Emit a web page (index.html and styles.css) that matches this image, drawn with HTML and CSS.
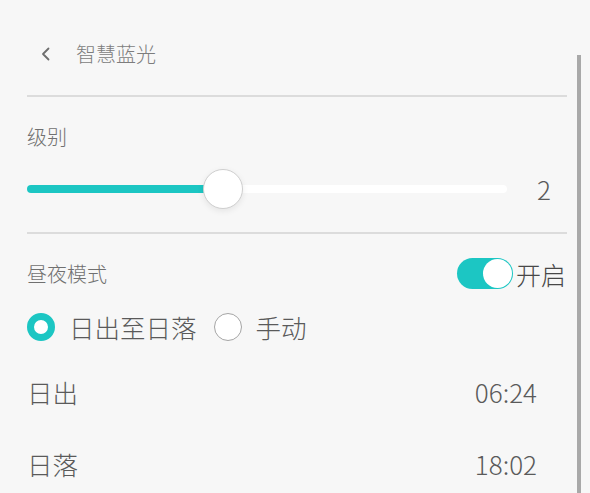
FILE: index.html
```html
<!DOCTYPE html>
<html lang="zh">
<head>
<meta charset="utf-8">
<link rel="stylesheet" href="styles.css">
</head>
<body>
<div class="window">
  <main class="panel">
    <header class="header">
      <svg class="back" width="12" height="16" viewBox="0 0 12 16"><path d="M8.5 2.5 L3 8 L8.5 13.5" fill="none" stroke="#6e6e6e" stroke-width="1.8" stroke-linecap="round" stroke-linejoin="round"/></svg>
      <span class="title">智慧蓝光</span>
    </header>
    <div class="divider"></div>

    <section class="level">
      <div class="label">级别</div>
      <div class="slider-row">
        <div class="slider">
          <div class="track"><div class="fill" style="width: 196px"></div></div>
          <div class="thumb" style="left: 196px"></div>
        </div>
        <span class="value">2</span>
      </div>
    </section>
    <div class="divider"></div>

    <section class="daynight">
      <div class="row-head">
        <span class="label">昼夜模式</span>
        <div class="switch-wrap">
          <span class="switch"><span class="knob"></span></span>
          <span class="switch-text">开启</span>
        </div>
      </div>
      <div class="radios">
        <label class="radio"><span class="dot on"></span><span class="rtext">日出至日落</span></label>
        <label class="radio"><span class="dot"></span><span class="rtext">手动</span></label>
      </div>
      <div class="times">
        <div class="time-row"><span class="tname">日出</span><span class="tval">06:24</span></div>
        <div class="time-row"><span class="tname">日落</span><span class="tval">18:02</span></div>
      </div>
    </section>
  </main>
  <div class="rail"><div class="thumbbar"></div></div>
</div>
</body>
</html>
```
FILE: styles.css
```css
html, body {
  margin: 0;
  padding: 0;
  height: 100%;
  overflow: hidden;
}
body {
  background: #f7f7f7;
  font-family: "Noto Sans CJK SC Light", "Noto Sans CJK SC DemiLight", "Noto Sans CJK SC", "Noto Sans", sans-serif;
  font-weight: 300;
  color: #666;
}
.window {
  display: flex;
  height: 493px;
}
.panel {
  width: 540px;
  padding-left: 27px;
  flex: none;
}
.header {
  height: 95px;
  display: flex;
  align-items: center;
  padding-top: 12px;
  box-sizing: border-box;
}
.back {
  margin-left: 13px;
  margin-right: 24px;
}
.title {
  font-size: 20px;
  color: #7d7d7d;
  line-height: 24px;
}
.divider {
  height: 2px;
  background: #dcdcdc;
}
.level {
  padding-top: 28px;
  height: 135px;
  box-sizing: border-box;
}
.label {
  font-size: 20px;
  line-height: 24px;
  color: #707070;
}
.slider-row {
  margin-top: 20px;
  height: 40px;
  display: flex;
  align-items: center;
}
.slider {
  position: relative;
  width: 480px;
  height: 40px;
  display: flex;
  align-items: center;
}
.track {
  width: 100%;
  height: 8px;
  border-radius: 4px;
  background: #fff;
  overflow: hidden;
}
.fill {
  height: 100%;
  background: #1cc6c3;
}
.thumb {
  position: absolute;
  top: 0;
  width: 40px;
  height: 40px;
  margin-left: -20px;
  box-sizing: border-box;
  border-radius: 50%;
  background: #fff;
  border: 1px solid #cfcfcf;
  box-shadow: 0 2px 6px rgba(0,0,0,0.08);
}
.value {
  margin-left: 30px;
  font-size: 26px;
  line-height: 30px;
  color: #5a5a5a;
}
.daynight {
  padding-top: 24px;
}
.row-head {
  height: 31px;
  display: flex;
  align-items: center;
  justify-content: space-between;
}
.switch-wrap {
  display: flex;
  align-items: center;
}
.switch {
  width: 56px;
  height: 31px;
  border-radius: 16px;
  background: #1cc6c3;
  display: flex;
  align-items: center;
  justify-content: flex-end;
  padding-right: 1px;
  box-sizing: border-box;
}
.knob {
  width: 29px;
  height: 29px;
  border-radius: 50%;
  background: #fff;
}
.switch-text {
  font-size: 25px;
  line-height: 30px;
  color: #484848;
  margin-left: 3px;
  margin-right: 1px;
}
.radios {
  margin-top: 24px;
  height: 28px;
  display: flex;
  align-items: center;
}
.radio {
  display: flex;
  align-items: center;
  margin-right: 17px;
}
.dot {
  width: 28px;
  height: 28px;
  box-sizing: border-box;
  border-radius: 50%;
  background: #fff;
  border: 1px solid #a5a5a5;
}
.dot.on {
  border: 7px solid #1cc6c3;
}
.rtext {
  margin-left: 14px;
  font-size: 25.5px;
  line-height: 30px;
  color: #5a5a5a;
}
.times {
  margin-top: 14px;
}
.time-row {
  height: 72px;
  display: flex;
  align-items: center;
  justify-content: space-between;
  padding-right: 30px;
}
.tname {
  font-size: 25.5px;
  color: #5a5a5a;
}
.tval {
  font-size: 26px;
  color: #5a5a5a;
}
.rail {
  margin-left: 10px;
  padding-top: 55px;
  width: 5px;
}
.thumbbar {
  width: 4px;
  height: 438px;
  background: #a9a9a9;
}
```
